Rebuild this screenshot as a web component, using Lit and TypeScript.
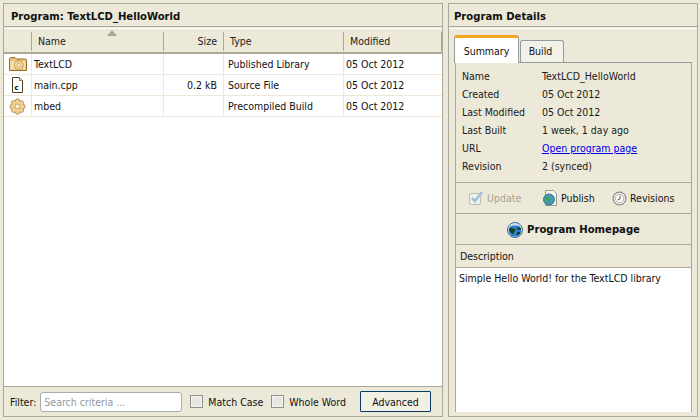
import { LitElement, css, html, svg } from "lit";
import { customElement } from "lit/decorators.js";

const lobes = [0, 45, 90, 135, 180, 225, 270, 315].map((a) => [
  8 + 5.4 * Math.cos((a * Math.PI) / 180),
  8 + 5.4 * Math.sin((a * Math.PI) / 180),
]);

// scalloped gear, drawn as a dark silhouette with a lighter one on top
const gear = (x: number, y: number, s: number) => svg`
  <g transform="translate(${x} ${y}) scale(${s})">
    ${lobes.map(([cx, cy]) => svg`<circle cx=${cx} cy=${cy} r="2.500" fill="#b58a4c" />`)}
    <circle cx="8" cy="8" r="6" fill="#b58a4c" />
    ${lobes.map(([cx, cy]) => svg`<circle cx=${cx} cy=${cy} r="1.700" fill="#f3d79c" />`)}
    <circle cx="8" cy="8" r="5.500" fill="#f0cf90" />
    <circle cx="8" cy="8" r="2.800" fill="#c9a163" />
    <circle cx="8" cy="8" r="2" fill="#fbf1d8" />
  </g>`;

const globe = (s: number) => html`
  <svg width=${s} height=${s} viewBox="0 0 16 16">
    <circle cx="8" cy="8" r="7.500" fill="#d8ecf8" stroke="#3a6a96" />
    <circle cx="8" cy="8.500" r="6.300" fill="#2f7fc4" />
    <path d="M1.800 7c2-1.500 3.500-.8 5.200-.3s1.500 1.800.5 2.800-1 2.200-1.800 2.800C4 11 2.500 9 1.800 7zM9.500 6c1.800-.8 3.500-.6 4.700.5.200 1.300-1 1.500-2.200 1.300S9.500 7 9.500 6zM10 10.500c1-.6 2.500-.7 3.400-.2-.5 1.400-1.500 2.400-2.800 3-.8-.7-1-1.900-.6-2.800z" fill="#14401c" />
    <path d="M3.200 4.200c1.700-2 6-2.800 9.600-.2-3-1-6.500-1-9.600.2z" fill="#fff" />
  </svg>`;

const rowIcons: Record<string, unknown> = {
  folder: html`<svg width="18" height="16" viewBox="0 0 18 16">
    <path d="M.5 14.500V2.500l1-1h4.500l1.500 1.500h9l1 1v10.500z" fill="#e9c07c" stroke="#9a6c2c" />
    <path d="M1.500 13.500V5h15v8.500z" fill="#f6dfae" />
    ${gear(4.500, 3.800, 0.66)}
  </svg>`,
  file: html`<svg width="18" height="16" viewBox="0 0 18 16">
    <path d="M3.500 .5h7l3 3v12h-10z" fill="#fff" stroke="#4c3d26" />
    <path d="M10.500 .5v3h3" fill="#e8e0c8" stroke="#8d7a50" />
    <text x="5.500" y="13" class="c">c</text>
  </svg>`,
  gear: html`<svg width="18" height="17" viewBox="0 0 18 17">${gear(0.500, 0.500, 1)}</svg>`,
};

const rows = [
  { icon: "folder", name: "TextLCD", size: "", type: "Published Library" },
  { icon: "file", name: "main.cpp", size: "0.2 kB", type: "Source File" },
  { icon: "gear", name: "mbed", size: "", type: "Precompiled Build" },
];

const details = [
  ["Name", "TextLCD_HelloWorld"],
  ["Created", "05 Oct 2012"],
  ["Last Modified", "05 Oct 2012"],
  ["Last Built", "1 week, 1 day ago"],
  ["URL", ""],
  ["Revision", "2 (synced)"],
];

@customElement("app-root")
export class AppRoot extends LitElement {
  static styles = css`
    :host {
      display: grid;
      grid-template-columns: 440px 250px;
      gap: 5px;
      box-sizing: border-box;
      width: 700px;
      height: 420px;
      padding: 3px 2px 3px 3px;
      background: #ece9d8;
      color: #111;
      font: 10.5px "DejaVu Sans Condensed", "DejaVu Sans", sans-serif;
      font-stretch: condensed;
      white-space: nowrap;
    }
    .panel {
      display: flex;
      flex-direction: column;
      min-height: 0;
      border: 1px solid #aca899;
    }
    .title {
      flex: none;
      box-sizing: border-box;
      height: 23px;
      padding-left: 7px;
      border-bottom: 1px solid #aca899;
      font-weight: bold;
      font-size: 11.2px;
      line-height: 25px;
    }
    .title.right {
      padding-left: 5px;
    }
    .list-head,
    .row {
      display: grid;
      grid-template-columns: 28px 132px 60px 120px 1fr;
    }
    .list-head {
      position: relative;
      flex: none;
      box-sizing: border-box;
      height: 26px;
      margin-top: 1px;
      border-top: 1px solid #fff;
      border-bottom: 2px solid #aca899;
      align-items: center;
      color: #222;
    }
    .list-head span {
      box-sizing: border-box;
      height: 19px;
      padding: 0 6px;
      border-right: 1px solid #aca899;
      line-height: 19px;
      margin-top: 2px;
    }
    .list-head span:last-child {
      border-right: none;
    }
    .list-head .num,
    .row .num {
      text-align: right;
    }
    .sort {
      position: absolute;
      left: 103px;
      top: 1px;
      width: 0;
      height: 0;
      border: 5px solid transparent;
      border-top: none;
      border-bottom: 6px solid #aca899;
    }
    .list {
      flex: 1;
      min-height: 0;
      background: #fff;
    }
    .row {
      height: 21px;
    }
    .row > div {
      box-sizing: border-box;
      padding: 0 2px;
      border-right: 1px solid #ece9d8;
      border-bottom: 1px solid #ece9d8;
      line-height: 20px;
    }
    .row > div:last-child {
      border-right: none;
    }
    .row > .ico {
      display: flex;
      align-items: center;
      padding: 0 0 0 5px;
    }
    .row > .num {
      padding-right: 6px;
    }
    .row > .type {
      padding-left: 4px;
    }
    .c {
      font: bold 7px "DejaVu Sans", sans-serif;
      fill: #000;
    }
    .filter {
      flex: none;
      display: flex;
      align-items: center;
      box-sizing: border-box;
      height: 30px;
      padding: 0 11px 0 6px;
      border-top: 1px solid #aca899;
    }
    .filter b {
      font-weight: normal;
      margin-top: 1px;
    }
    .search {
      box-sizing: border-box;
      width: 142px;
      height: 20px;
      margin: 0 8px 0 4px;
      padding-left: 3px;
      border: 1px solid #a5acb2;
      border-radius: 3px;
      background: #fff;
      color: #8f98a2;
      line-height: 18px;
    }
    .check {
      display: flex;
      align-items: center;
      gap: 5px;
      margin-right: 8px;
    }
    .box {
      box-sizing: border-box;
      width: 13px;
      height: 13px;
      border: 1px solid #8d8f90;
      background: #e7e6e0;
      box-shadow: inset 0 0 0 1px #f4f4f0;
    }
    .advanced {
      box-sizing: border-box;
      width: 71px;
      height: 21px;
      margin-left: auto;
      border: 1px solid #0a3a66;
      background: #f2f0e4;
      border-radius: 1px;
      text-align: center;
      line-height: 20px;
    }
    .tabs-wrap {
      flex: none;
      padding: 6px 5px 0 5px;
      margin-top: 1px;
      border-top: 1px solid #fff;
    }
    .tabs {
      display: flex;
      align-items: flex-end;
      height: 27px;
      border-bottom: 1px solid #919b9c;
    }
    .tab {
      box-sizing: border-box;
      width: 44px;
      height: 22px;
      margin-left: 1px;
      padding-right: 3px;
      border: 1px solid #919b9c;
      border-bottom: none;
      border-radius: 3px 3px 0 0;
      background: #f3f2ea;
      text-align: center;
      line-height: 20px;
    }
    .tab.on {
      position: relative;
      top: 1px;
      width: 65px;
      height: 28px;
      margin-left: 0;
      padding-right: 0;
      border-top: 3px solid #f4a522;
      background: #fff;
      line-height: 26px;
    }
    .body {
      flex: 1;
      display: flex;
      flex-direction: column;
      min-height: 0;
      margin: 0 5px 4px 6px;
      border-left: 1px solid #aca899;
      border-right: 1px solid #aca899;
    }
    .info {
      flex: none;
      display: grid;
      grid-template-columns: 80px 1fr;
      grid-auto-rows: 18px;
      box-sizing: border-box;
      height: 119px;
      padding: 4px 0 0 6px;
      line-height: 18px;
      color: #1a1a1a;
    }
    a {
      color: #0000ee;
      text-decoration: underline;
    }
    .tools {
      flex: none;
      display: flex;
      align-items: center;
      box-sizing: border-box;
      height: 32px;
      padding: 0 0 0 12px;
      border-top: 1px solid #aca899;
      border-bottom: 1px solid #aca899;
    }
    .tool {
      display: flex;
      align-items: center;
      gap: 3px;
    }
    .tool.off {
      color: #a5a294;
      width: 74px;
    }
    .tool.pub {
      width: 70px;
    }
    .home {
      flex: none;
      display: flex;
      align-items: center;
      justify-content: center;
      gap: 4px;
      box-sizing: border-box;
      height: 31px;
      padding-top: 1px;
      border-bottom: 1px solid #aca899;
      font-weight: bold;
      font-size: 11.2px;
    }
    .desc-head {
      flex: none;
      box-sizing: border-box;
      height: 23px;
      padding-left: 4px;
      border-bottom: 1px solid #aca899;
      line-height: 22px;
    }
    .desc {
      flex: 1;
      background: #fff;
      padding: 2px 3px;
      line-height: 17px;
    }
  `;

  render() {
    return html`
      <section class="panel">
        <div class="title">Program: TextLCD_HelloWorld</div>
        <div class="list-head">
          <span></span><span>Name</span><span class="num">Size</span><span>Type</span><span>Modified</span>
          <i class="sort"></i>
        </div>
        <div class="list">
          ${rows.map(
            (r) => html`<div class="row">
              <div class="ico">${rowIcons[r.icon]}</div>
              <div>${r.name}</div>
              <div class="num">${r.size}</div>
              <div class="type">${r.type}</div>
              <div>05 Oct 2012</div>
            </div>`
          )}
        </div>
        <div class="filter">
          <b>Filter:</b>
          <div class="search">Search criteria ...</div>
          <label class="check"><i class="box"></i><b>Match Case</b></label>
          <label class="check"><i class="box"></i><b>Whole Word</b></label>
          <div class="advanced">Advanced</div>
        </div>
      </section>
      <section class="panel">
        <div class="title right">Program Details</div>
        <div class="tabs-wrap">
          <div class="tabs">
            <div class="tab on">Summary</div>
            <div class="tab">Build</div>
          </div>
        </div>
        <div class="body">
          <div class="info">
            ${details.map(
              ([k, v]) => html`<span>${k}</span>
                <span>${k === "URL" ? html`<a href="#">Open program page</a>` : v}</span>`
            )}
          </div>
          <div class="tools">
            <div class="tool off">
              <svg width="16" height="16" viewBox="0 0 16 16">
                <rect x="1.500" y="3.500" width="11" height="11" rx="1.500" fill="#eef0ee" stroke="#bdbdb4" />
                <path d="M4 8l3 3 7-9" fill="none" stroke="#9fc0d8" stroke-width="2.500" />
              </svg>
              Update
            </div>
            <div class="tool pub">
              <svg width="16" height="18" viewBox="0 0 16 18">
                <path d="M3.500 1.500h8l3 3v12h-11z" fill="#f5f4ee" stroke="#9a9a90" />
                <circle cx="7" cy="10.500" r="5.500" fill="#3f9ad0" stroke="#3c7a6a" />
                <path d="M3 9c2-2 4-1 5 0s0 3-1 5c-2-1-3.500-3-4-5z" fill="#4da03a" />
              </svg>
              Publish
            </div>
            <div class="tool">
              <svg width="15" height="15" viewBox="0 0 15 15">
                <circle cx="7.500" cy="7.500" r="6.500" fill="#e8e8e4" stroke="#77776f" />
                <circle cx="7.500" cy="7.500" r="4.200" fill="#fff" stroke="#b5b5ad" />
                <path d="M8 4.500V8L5.500 9" fill="none" stroke="#555" />
              </svg>
              Revisions
            </div>
          </div>
          <div class="home">${globe(16)} Program Homepage</div>
          <div class="desc-head">Description</div>
          <div class="desc">Simple Hello World! for the TextLCD library</div>
        </div>
      </section>
    `;
  }
}
